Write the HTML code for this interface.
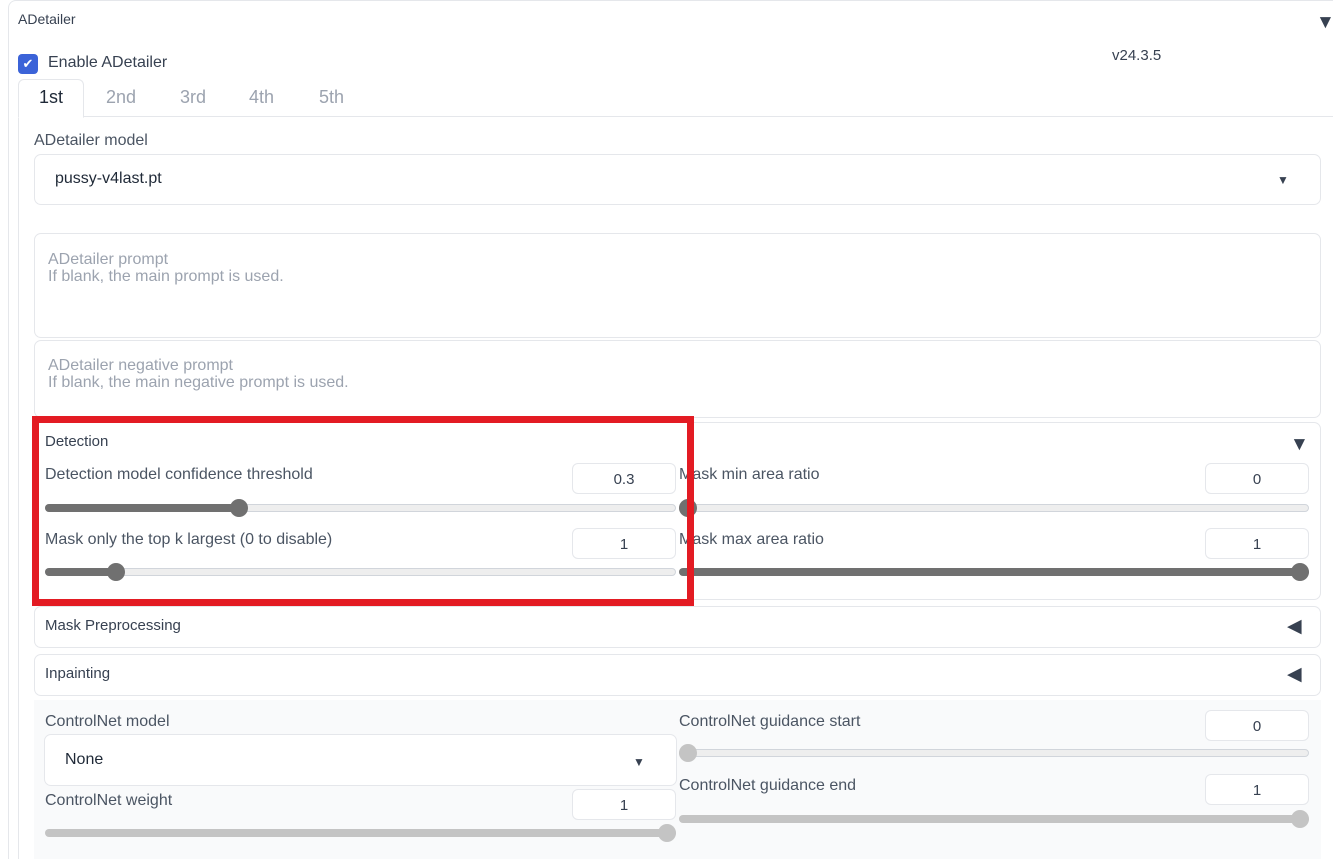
<!DOCTYPE html>
<html><head><style>
*{box-sizing:border-box;margin:0;padding:0}
html,body{width:1333px;height:859px;overflow:hidden}
body{background:#fff;font-family:"Liberation Sans",sans-serif;color:#374151;position:relative;font-size:16px}
.a{position:absolute}
.box{position:absolute;border:1px solid #e5e7eb;border-radius:7px;background:#fff}
.lbl{position:absolute;font-size:16px;color:#4b5563}
.num{position:absolute;width:104px;height:31px;border:1px solid #e5e7eb;border-radius:6px;text-align:center;line-height:31px;font-size:15px;color:#374151;background:#fff}
.trk{position:absolute;height:8px;border:1px solid #d1d5db;border-radius:4px;background:#eee}
.fill{position:absolute;height:8px;border-radius:4px;background:#707070}
.th{position:absolute;width:18px;height:18px;border-radius:50%;background:#707070}
.tri{position:absolute;font-size:19px;color:#374151}
</style></head><body>
<div class="a" style="left:8px;top:0;width:1325px;height:859px;border:1px solid #e5e7eb;border-right:none;border-bottom:none;border-radius:8px 0 0 0"></div>
<div class="a" style="left:18px;top:11px;font-size:14px;color:#374151">ADetailer</div>
<div class="tri" style="left:1316px;top:12px">▼</div>
<div class="a" style="left:18px;top:54px;width:20px;height:20px;border-radius:4px;background:#3b63d8;color:#fff;font-size:13px;text-align:center;line-height:20px">✔</div>
<div class="a" style="left:48px;top:54px;font-size:16px">Enable ADetailer</div>
<div class="a" style="left:1112px;top:47px;font-size:15px">v24.3.5</div>
<div class="a" style="left:18px;top:116px;width:1315px;height:743px;border-left:1px solid #e5e7eb;border-top:1px solid #e5e7eb"></div>
<div class="a" style="left:18px;top:79px;width:66px;height:39px;border:1px solid #e5e7eb;border-bottom:1px solid #fff;border-radius:6px 6px 0 0;background:#fff"></div>
<div class="a" style="left:39px;top:87px;font-size:18px;color:#1f2937">1st</div>
<div class="a" style="left:106px;top:87px;font-size:18px;color:#9ca3af">2nd</div>
<div class="a" style="left:180px;top:87px;font-size:18px;color:#9ca3af">3rd</div>
<div class="a" style="left:249px;top:87px;font-size:18px;color:#9ca3af">4th</div>
<div class="a" style="left:319px;top:87px;font-size:18px;color:#9ca3af">5th</div>
<div class="lbl" style="left:34px;top:132px">ADetailer model</div>
<div class="box" style="left:34px;top:154px;width:1287px;height:51px"></div>
<div class="a" style="left:55px;top:170px;font-size:16px;color:#1f2937">pussy-v4last.pt</div>
<div class="a" style="left:1277px;top:173px;font-size:12px">▼</div>
<div class="box" style="left:34px;top:233px;width:1287px;height:105px"></div>
<div class="a" style="left:48px;top:251px;font-size:16px;color:#9ca3af;line-height:17px">ADetailer prompt<br>If blank, the main prompt is used.</div>
<div class="box" style="left:34px;top:340px;width:1287px;height:78px"></div>
<div class="a" style="left:48px;top:357px;font-size:16px;color:#9ca3af;line-height:17px">ADetailer negative prompt<br>If blank, the main negative prompt is used.</div>
<div class="box" style="left:34px;top:422px;width:1287px;height:178px"></div>
<div class="a" style="left:45px;top:433px;font-size:15px">Detection</div>
<div class="tri" style="left:1290px;top:434px">▼</div>
<div class="lbl" style="left:45px;top:466px">Detection model confidence threshold</div>
<div class="num" style="left:572px;top:463px">0.3</div>
<div class="trk" style="left:45px;top:504px;width:631px"></div><div class="fill" style="left:45px;top:504px;width:195px"></div><div class="th" style="left:230px;top:499px"></div>
<div class="lbl" style="left:45px;top:531px">Mask only the top k largest (0 to disable)</div>
<div class="num" style="left:572px;top:528px">1</div>
<div class="trk" style="left:45px;top:568px;width:631px"></div><div class="fill" style="left:45px;top:568px;width:70px"></div><div class="th" style="left:107px;top:563px"></div>
<div class="lbl" style="left:679px;top:466px">Mask min area ratio</div>
<div class="num" style="left:1205px;top:463px">0</div>
<div class="trk" style="left:679px;top:504px;width:630px"></div><div class="th" style="left:679px;top:499px"></div>
<div class="lbl" style="left:679px;top:531px">Mask max area ratio</div>
<div class="num" style="left:1205px;top:528px">1</div>
<div class="fill" style="left:679px;top:568px;width:630px"></div><div class="th" style="left:1291px;top:563px"></div>
<div class="a" style="left:32px;top:416px;width:662px;height:190px;border:7px solid #e31b23"></div>
<div class="box" style="left:34px;top:606px;width:1287px;height:42px"></div>
<div class="a" style="left:45px;top:617px;font-size:15px">Mask Preprocessing</div>
<div class="tri" style="left:1287px;top:615px">◀</div>
<div class="box" style="left:34px;top:654px;width:1287px;height:42px"></div>
<div class="a" style="left:45px;top:665px;font-size:15px">Inpainting</div>
<div class="tri" style="left:1287px;top:663px">◀</div>
<div class="a" style="left:34px;top:700px;width:1287px;height:159px;background:#f9fafb"></div>
<div class="lbl" style="left:45px;top:713px">ControlNet model</div>
<div class="box" style="left:44px;top:734px;width:633px;height:52px"></div>
<div class="a" style="left:65px;top:751px;font-size:16px;color:#1f2937">None</div>
<div class="a" style="left:633px;top:755px;font-size:12px">▼</div>
<div class="lbl" style="left:45px;top:792px">ControlNet weight</div>
<div class="num" style="left:572px;top:789px">1</div>
<div class="a" style="left:45px;top:829px;width:631px;height:8px;border-radius:4px;background:#c4c4c4"></div><div class="th" style="left:658px;top:824px;background:#c4c4c4"></div>
<div class="lbl" style="left:679px;top:713px">ControlNet guidance start</div>
<div class="num" style="left:1205px;top:710px">0</div>
<div class="trk" style="left:679px;top:749px;width:630px"></div><div class="th" style="left:679px;top:744px;background:#c4c4c4"></div>
<div class="lbl" style="left:679px;top:777px">ControlNet guidance end</div>
<div class="num" style="left:1205px;top:774px">1</div>
<div class="a" style="left:679px;top:815px;width:630px;height:8px;border-radius:4px;background:#c4c4c4"></div><div class="th" style="left:1291px;top:810px;background:#c4c4c4"></div>
</body></html>
